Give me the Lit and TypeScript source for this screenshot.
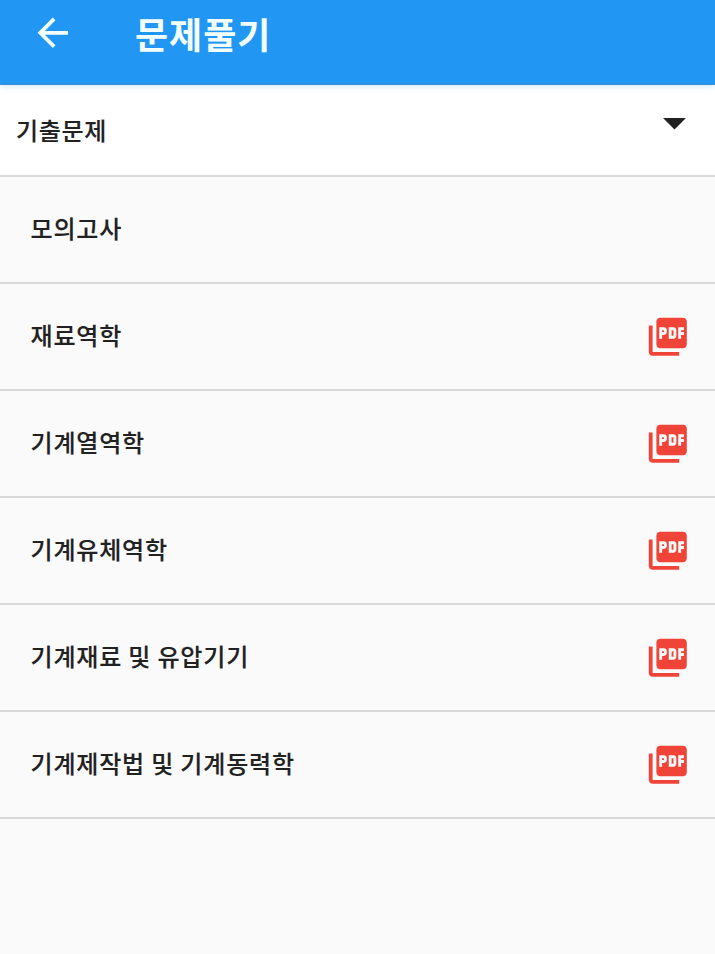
import { LitElement, html, css, nothing } from "lit";
import { customElement } from "lit/decorators.js";

interface Subject {
  title: string;
  pdf: boolean;
}

const subjects: Subject[] = [
  { title: "모의고사", pdf: false },
  { title: "재료역학", pdf: true },
  { title: "기계열역학", pdf: true },
  { title: "기계유체역학", pdf: true },
  { title: "기계재료 및 유압기기", pdf: true },
  { title: "기계제작법 및 기계동력학", pdf: true },
];

@customElement("app-root")
export class AppRoot extends LitElement {
  static styles = css`
    :host {
      display: flex;
      flex-direction: column;
      height: 954px;
      overflow: hidden;
      background: #fafafa;
      color: #212121;
      font-family: "Noto Sans CJK KR", "Noto Sans", sans-serif;
      font-weight: 500;
      font-size: 24px;
      letter-spacing: 0.82px;
      line-height: 36px;
      -webkit-text-stroke: 0.15px currentColor;
    }
    svg {
      display: block;
      flex: none;
      width: 45.6px;
      height: 45.6px;
      fill: currentColor;
    }
    .bar {
      box-sizing: border-box;
      flex: none;
      display: flex;
      align-items: flex-start;
      height: 85px;
      padding: 10px 0 0 30px;
      background: #2196f3;
      color: #f3ffff;
      border-bottom: 1px solid #3a91d2;
      box-shadow: 0 1px 6px rgba(80, 170, 220, 0.3);
      z-index: 1;
    }
    .heading {
      margin: -4px 0 0 59.4px;
      font-size: 36px;
      font-weight: 700;
      letter-spacing: 1px;
      line-height: 54px;
      -webkit-text-stroke: 0;
    }
    .select {
      box-sizing: border-box;
      flex: none;
      display: flex;
      justify-content: space-between;
      align-items: flex-start;
      height: 92px;
      padding: 10px 13px 0 16px;
      background: #fff;
      border-bottom: 2px solid #dadada;
    }
    .label {
      margin-top: 17px;
      letter-spacing: 0.65px;
    }
    .arrow {
      width: 55px;
      height: 55px;
    }
    .list {
      margin: 0;
      padding: 0;
      list-style: none;
    }
    .row {
      box-sizing: border-box;
      display: flex;
      justify-content: space-between;
      align-items: center;
      height: 107px;
      padding: 0 24.8px 0 30.5px;
      border-bottom: 2px solid #dadada;
    }
    .title {
      margin-bottom: 4px;
    }
    .pdf {
      color: #f04438;
    }
  `;

  private renderPdf() {
    return html`<svg class="pdf" viewBox="0 0 24 24">
      <path
        d="M20 2H8c-1.1 0-2 .9-2 2v12c0 1.1.9 2 2 2h12c1.1 0 2-.9 2-2V4c0-1.1-.9-2-2-2zm-8.5 7.5c0 .83-.67 1.5-1.5 1.5H9v2H7.5V7H10c.83 0 1.5.67 1.5 1.5v1zm5 2c0 .83-.67 1.5-1.5 1.5h-2.5V7H15c.83 0 1.5.67 1.5 1.5v3zm4-3H19v1h1.5V11H19v2h-1.5V7h3v1.5zM9 9.5h1v-1H9v1zM4 6H2v14c0 1.1.9 2 2 2h14v-2H4V6zm10 5.5h1v-3h-1v3z"
      />
    </svg>`;
  }

  render() {
    return html`
      <header class="bar">
        <svg viewBox="0 0 24 24">
          <path d="M20 11H7.83l5.59-5.59L12 4l-8 8 8 8 1.41-1.41L7.83 13H20v-2z" />
        </svg>
        <h1 class="heading">문제풀기</h1>
      </header>
      <div class="select">
        <span class="label">기출문제</span>
        <svg class="arrow" viewBox="0 0 24 24"><path d="M7 10l5 5 5-5z" /></svg>
      </div>
      <ul class="list">
        ${subjects.map(
          (s) => html`<li class="row">
            <span class="title">${s.title}</span>
            ${s.pdf ? this.renderPdf() : nothing}
          </li>`
        )}
      </ul>
    `;
  }
}
